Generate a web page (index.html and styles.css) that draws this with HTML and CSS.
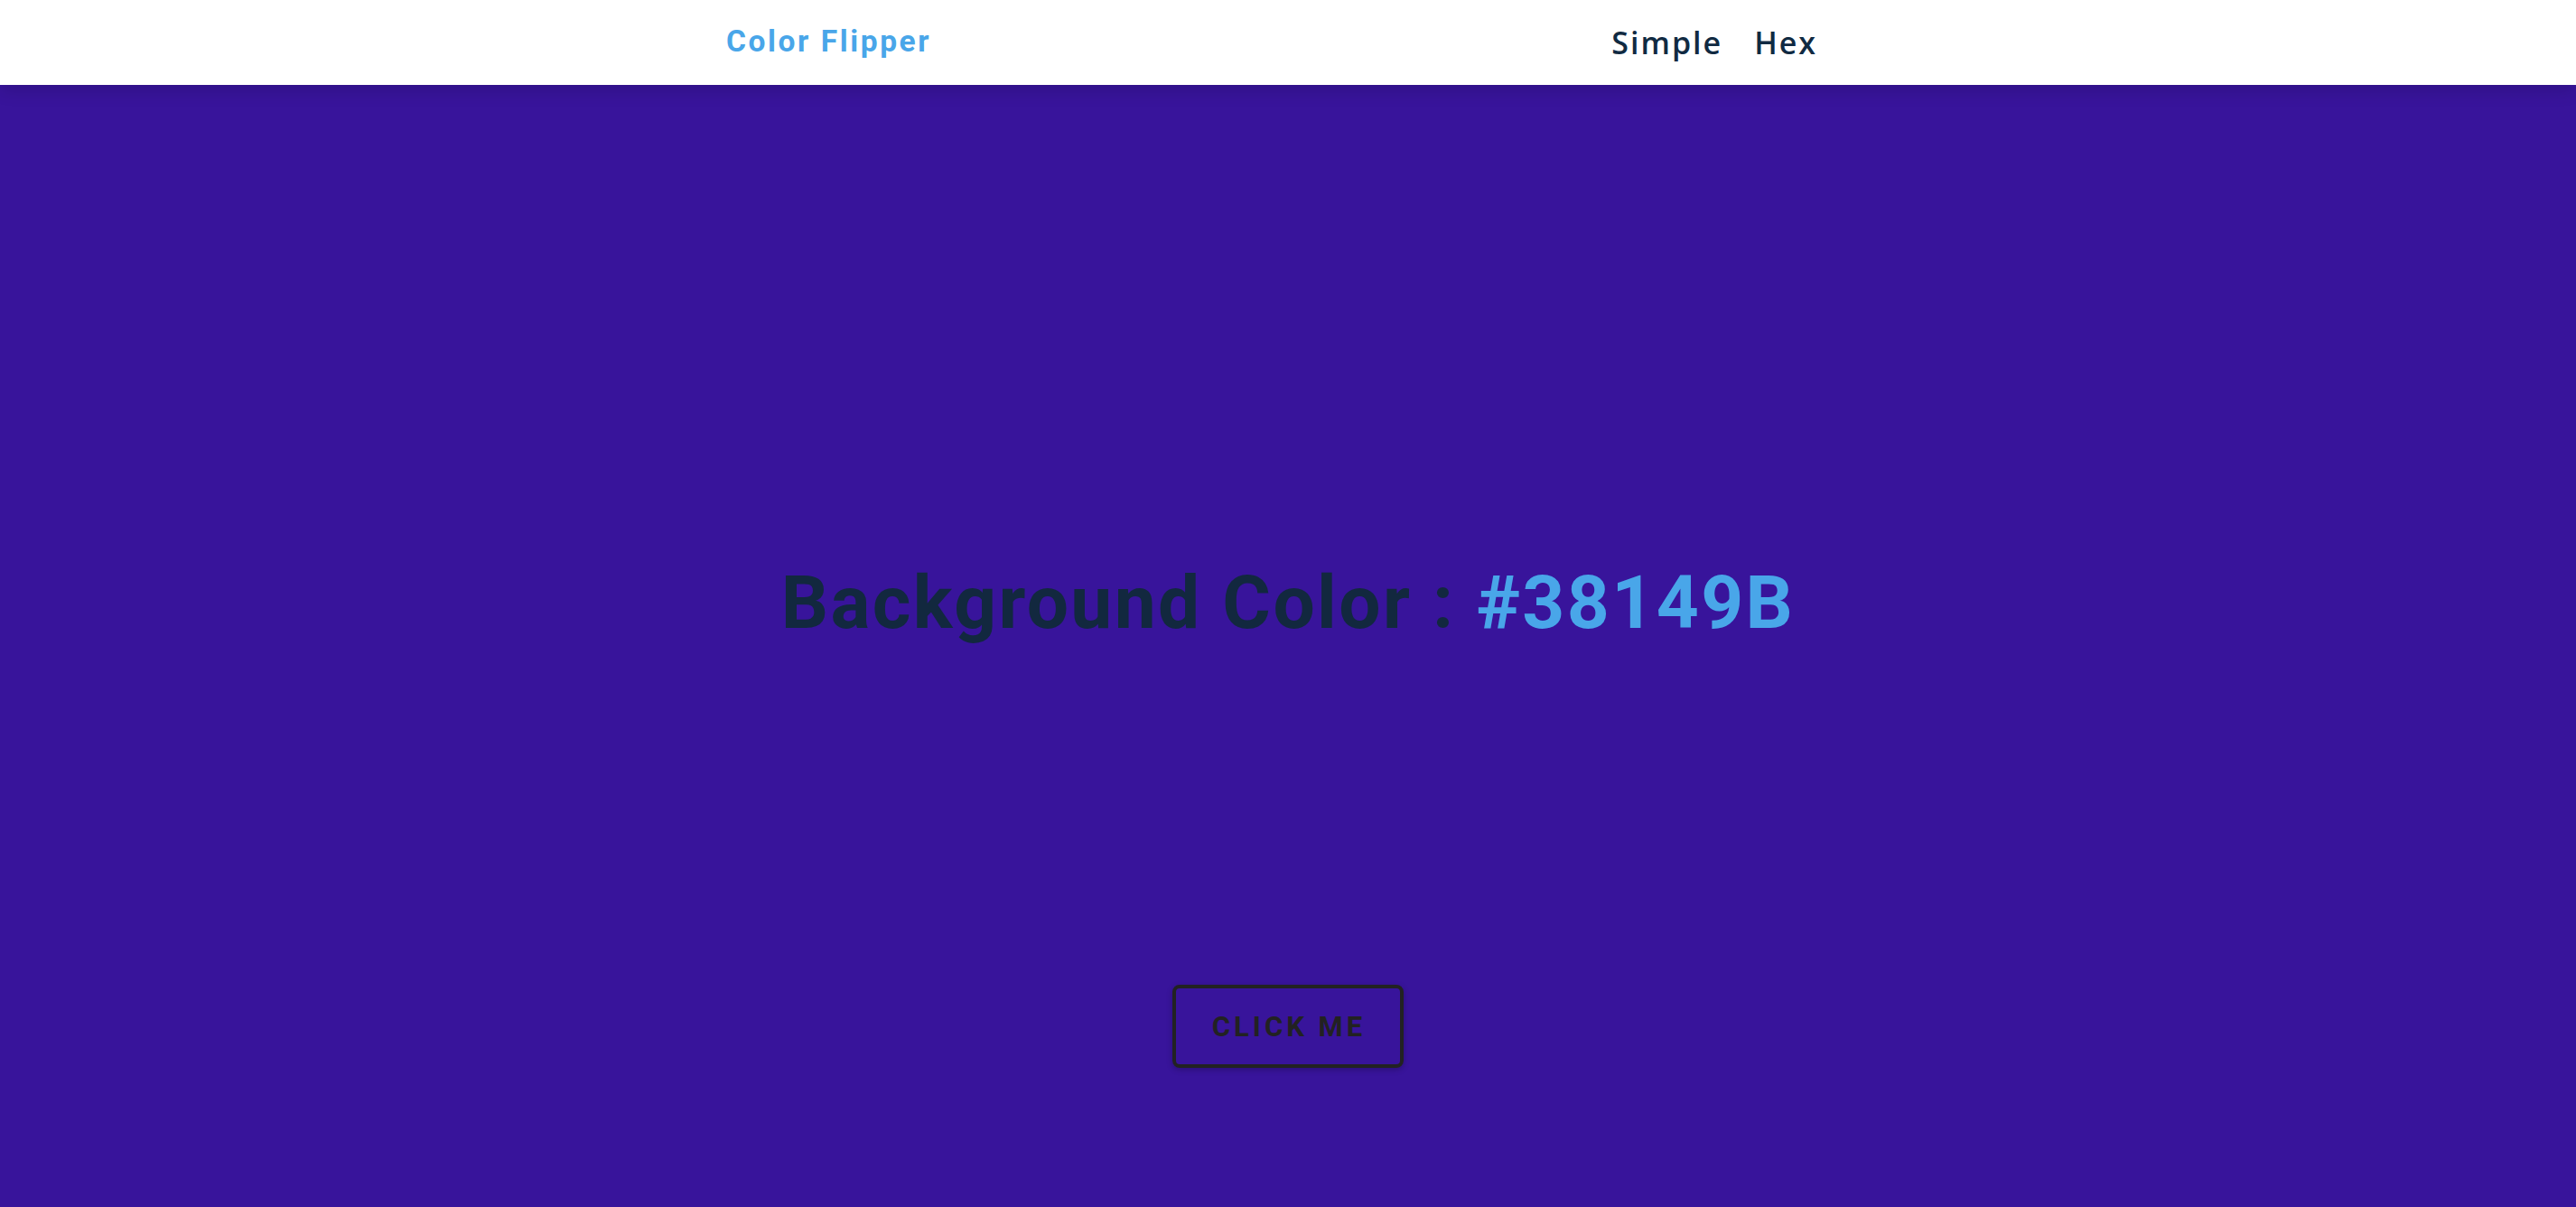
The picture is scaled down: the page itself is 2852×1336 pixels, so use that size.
FILE: index.html
```html
<!DOCTYPE html>
<html lang="en">
<head>
<meta charset="utf-8">
<title>Color Flipper</title>
<link rel="stylesheet" href="styles.css">
</head>
<body>
<nav class="nav">
  <div class="nav-center">
    <h4 class="logo">Color Flipper</h4>
    <ul class="nav-links">
      <li><a href="#">Simple</a></li>
      <li><a href="#">Hex</a></li>
    </ul>
  </div>
</nav>
<main class="main">
  <div class="container">
    <h2 class="title">Background Color : <span class="color">#38149B</span></h2>
    <button class="btn" type="button">click me</button>
  </div>
</main>
</body>
</html>
```

FILE: styles.css
```css
* {
  margin: 0;
  padding: 0;
  box-sizing: border-box;
}

html, body {
  height: 100%;
  overflow: hidden;
}

body {
  background: #38149b;
  font-family: "Open Sans", "DejaVu Sans", sans-serif;
}

.nav {
  position: relative;
  z-index: 2;
  height: 94px;
  background: #fff;
  box-shadow: 0 6px 18px rgba(0, 0, 0, 0.14);
}

.nav-center {
  width: 1244px;
  height: 100%;
  margin: 0 auto;
  display: flex;
  align-items: center;
  justify-content: space-between;
}

.logo {
  font-family: Roboto, "Liberation Sans", sans-serif;
  font-weight: 700;
  font-size: 33.5px;
  letter-spacing: 2.6px;
  color: #49a6e9;
  margin-top: -4px;
}

.nav-links {
  list-style: none;
  display: flex;
  gap: 35px;
  padding-right: 36px;
}

.nav-links a {
  text-decoration: none;
  font-family: "Open Sans", sans-serif;
  font-weight: 600;
  font-size: 34px;
  letter-spacing: 2px;
  color: #102a42;
}

.main {
  height: calc(100% - 94px);
  background: #38149b;
}

.container {
  display: flex;
  flex-direction: column;
  align-items: center;
}

.title {
  font-family: Roboto, "Liberation Sans", sans-serif;
  font-weight: 700;
  font-size: 82px;
  letter-spacing: 2.4px;
  color: #12283f;
  margin-top: 532px;
  line-height: 1;
}

.color {
  color: #49a6e9;
}

.btn {
  margin-top: 382px;
  height: 92px;
  padding: 0 38px 0 40px;
  background: transparent;
  border: 4px solid #222;
  border-radius: 8px;
  font-family: Roboto, "Liberation Sans", sans-serif;
  font-weight: 700;
  font-size: 31px;
  letter-spacing: 4px;
  text-transform: uppercase;
  color: #222;
  box-shadow: 0 2px 6px rgba(0, 0, 0, 0.25);
}
```
